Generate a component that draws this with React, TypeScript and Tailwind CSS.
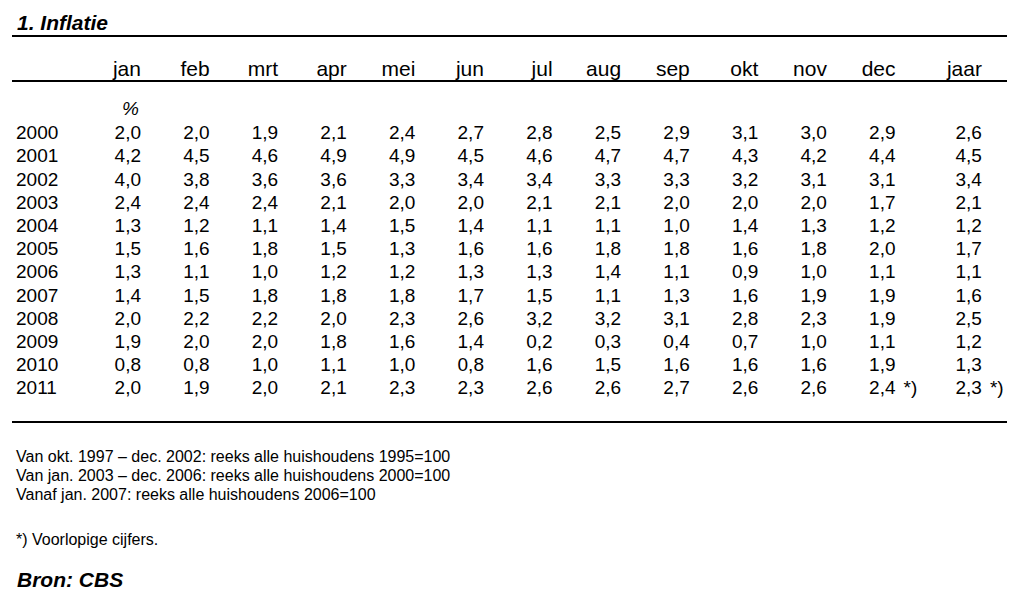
const months = ["jan", "feb", "mrt", "apr", "mei", "jun", "jul", "aug", "sep", "okt", "nov", "dec"];

interface Row {
  year: string;
  values: string[];
  total: string;
  provisional?: boolean;
}

const rows: Row[] = [
  { year: "2000", values: ["2,0", "2,0", "1,9", "2,1", "2,4", "2,7", "2,8", "2,5", "2,9", "3,1", "3,0", "2,9"], total: "2,6" },
  { year: "2001", values: ["4,2", "4,5", "4,6", "4,9", "4,9", "4,5", "4,6", "4,7", "4,7", "4,3", "4,2", "4,4"], total: "4,5" },
  { year: "2002", values: ["4,0", "3,8", "3,6", "3,6", "3,3", "3,4", "3,4", "3,3", "3,3", "3,2", "3,1", "3,1"], total: "3,4" },
  { year: "2003", values: ["2,4", "2,4", "2,4", "2,1", "2,0", "2,0", "2,1", "2,1", "2,0", "2,0", "2,0", "1,7"], total: "2,1" },
  { year: "2004", values: ["1,3", "1,2", "1,1", "1,4", "1,5", "1,4", "1,1", "1,1", "1,0", "1,4", "1,3", "1,2"], total: "1,2" },
  { year: "2005", values: ["1,5", "1,6", "1,8", "1,5", "1,3", "1,6", "1,6", "1,8", "1,8", "1,6", "1,8", "2,0"], total: "1,7" },
  { year: "2006", values: ["1,3", "1,1", "1,0", "1,2", "1,2", "1,3", "1,3", "1,4", "1,1", "0,9", "1,0", "1,1"], total: "1,1" },
  { year: "2007", values: ["1,4", "1,5", "1,8", "1,8", "1,8", "1,7", "1,5", "1,1", "1,3", "1,6", "1,9", "1,9"], total: "1,6" },
  { year: "2008", values: ["2,0", "2,2", "2,2", "2,0", "2,3", "2,6", "3,2", "3,2", "3,1", "2,8", "2,3", "1,9"], total: "2,5" },
  { year: "2009", values: ["1,9", "2,0", "2,0", "1,8", "1,6", "1,4", "0,2", "0,3", "0,4", "0,7", "1,0", "1,1"], total: "1,2" },
  { year: "2010", values: ["0,8", "0,8", "1,0", "1,1", "1,0", "0,8", "1,6", "1,5", "1,6", "1,6", "1,6", "1,9"], total: "1,3" },
  { year: "2011", values: ["2,0", "1,9", "2,0", "2,1", "2,3", "2,3", "2,6", "2,6", "2,7", "2,6", "2,6", "2,4"], total: "2,3", provisional: true },
];

const gridCols = "grid grid-cols-[56.4px_repeat(12,68.6px)_86.4px] pl-1";

function Cell({ value, mark }: { value: string; mark?: boolean }) {
  return (
    <div className="text-right">
      <span className="relative whitespace-nowrap">
        {value}
        {mark && <span className="absolute left-full ml-2">*)</span>}
      </span>
    </div>
  );
}

export default function App() {
  return (
    <div className="min-h-screen bg-white text-black font-['Liberation_Sans',Arial,sans-serif]">
      <div className="ml-3 w-[995px]">
        {/* Title */}
        <h1 className="pt-[11px] pl-[5px] border-b-2 border-black text-[21px] leading-6 font-bold italic">
          1. Inflatie
        </h1>

        {/* Column headers */}
        <div className={`${gridCols} mt-5 border-b-2 border-black text-[21px] leading-[23px]`}>
          <div />
          {months.map((m) => (
            <div key={m} className="text-right">
              {m}
            </div>
          ))}
          <div className="text-right">jaar</div>
        </div>

        {/* Body */}
        <div className="pt-[15px] pb-[21px] border-b-2 border-black text-[19px] leading-[23.2px]">
          <div className={`${gridCols} mb-[1px]`}>
            <div />
            <div className="text-right italic pr-[2px]">%</div>
          </div>
          {rows.map((r) => (
            <div key={r.year} className={gridCols}>
              <div>{r.year}</div>
              {r.values.map((v, i) => (
                <Cell key={i} value={v} mark={r.provisional && i === 11} />
              ))}
              <Cell value={r.total} mark={r.provisional} />
            </div>
          ))}
        </div>

        {/* Notes */}
        <div className="mt-6 pl-1 text-[16px] leading-[19px]">
          <p>Van okt. 1997 – dec. 2002: reeks alle huishoudens 1995=100</p>
          <p>Van jan. 2003 – dec. 2006: reeks alle huishoudens 2000=100</p>
          <p>Vanaf jan. 2007: reeks alle huishoudens 2006=100</p>
          <p className="mt-[26px]">*) Voorlopige cijfers.</p>
        </div>

        <p className="mt-[19px] pl-[5px] text-[21px] leading-6 font-bold italic">Bron: CBS</p>
      </div>
    </div>
  );
}
